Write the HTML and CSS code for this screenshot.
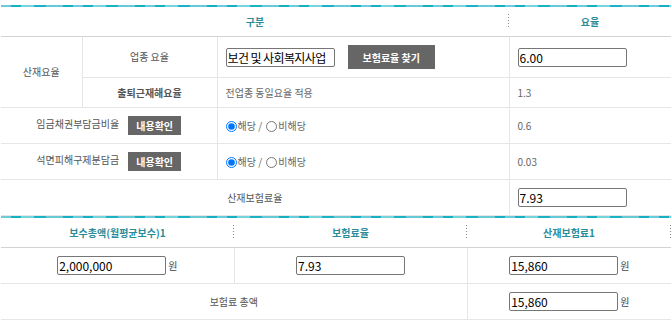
FILE: index.html
```html
<!DOCTYPE html>
<html>
<head>
	<meta charset="UTF-8">
	<title>산재보험료 계산</title>
	<link rel="stylesheet" href="styles.css">
</head>
<body>
	<div class="calc">
		<div class="bar"></div>
		<table class="rate_table">
			<colgroup>
				<col class="c1"><col class="c2"><col class="c3"><col>
			</colgroup>
			<tr class="head">
				<th colspan="3" class="dotted">구분</th>
				<th>요율</th>
			</tr>
			<tr class="tall">
				<td rowspan="2" class="label line_r">산재요율</td>
				<td class="label line_r">업종 요율</td>
				<td class="left line_r">
					<input type="text" class="box kind" value="보건 및 사회복지사업">
					<button type="button" class="btn_find">보험료율 찾기</button>
				</td>
				<td class="left"><input type="text" class="box" value="6.00"></td>
			</tr>
			<tr class="short">
				<td class="label strong line_r">출퇴근재해요율</td>
				<td class="left note line_r">전업종 동일요율 적용</td>
				<td class="left note">1.3</td>
			</tr>
			<tr>
				<td colspan="2" class="label line_r">임금채권부담금비율<button type="button" class="btn_view">내용확인</button></td>
				<td class="left note line_r">
					<label><input type="radio" name="r1" checked>해당</label> / <label><input type="radio" name="r1" class="no">비해당</label>
				</td>
				<td class="left note">0.6</td>
			</tr>
			<tr>
				<td colspan="2" class="label line_r">석면피해구제분담금<button type="button" class="btn_view">내용확인</button></td>
				<td class="left note line_r">
					<label><input type="radio" name="r2" checked>해당</label> / <label><input type="radio" name="r2" class="no">비해당</label>
				</td>
				<td class="left note">0.03</td>
			</tr>
			<tr>
				<td colspan="3" class="label line_r">산재보험료율</td>
				<td class="left"><input type="text" class="box" value="7.93"></td>
			</tr>
		</table>

		<div class="bar"></div>
		<table class="fee_table">
			<colgroup>
				<col class="f1"><col class="f2"><col>
			</colgroup>
			<tr class="head">
				<th class="dotted">보수총액(월평균보수)1</th>
				<th class="dotted">보험료율</th>
				<th class="dotted">산재보험료1</th>
			</tr>
			<tr>
				<td class="line_r"><input type="text" class="box" value="2,000,000"><span class="won">원</span></td>
				<td class="line_r"><input type="text" class="box" value="7.93"></td>
				<td><input type="text" class="box" value="15,860"><span class="won">원</span></td>
			</tr>
			<tr>
				<td colspan="2" class="label line_r">보험료 총액</td>
				<td><input type="text" class="box" value="15,860"><span class="won">원</span></td>
			</tr>
		</table>
	</div>
</body>
</html>
```

FILE: styles.css
```css
body {
	margin:0;
	background:#fff;
	font-family:"Noto Sans CJK KR", "Noto Sans", sans-serif;
	font-size:10px;
	color:#555;
}
.calc {
	padding:5px 1px 0 1px;
}
.bar {
	height:2px;
	background:repeating-linear-gradient(to right, #6accd8 0, #6accd8 10px, #16b0c4 10px, #16b0c4 20px, #7ad2dc 20px, #7ad2dc 33px, #1ab2c5 33px, #1ab2c5 45px, #66cad6 45px, #66cad6 62px, #14afc3 62px, #14afc3 72px);
}
table {
	width:100%;
	border-collapse:collapse;
	table-layout:fixed;
}
.c1 { width:81px; }
.c2 { width:135px; }
.c3 { width:292px; }
.f1 { width:233px; }
.f2 { width:233px; }
th {
	height:29px;
	padding:0;
	font-weight:bold;
	color:#2b8c99;
	text-align:center;
	border-bottom:1px solid #d3d3d3;
}
th.dotted {
	background-image:repeating-linear-gradient(to bottom, #888 0, #888 1px, transparent 1px, transparent 3px);
	background-size:1px 15px;
	background-position:right center;
	background-repeat:no-repeat;
}
td {
	padding:0;
	height:35px;
	border-bottom:1px solid #e6e6e6;
	text-align:center;
	line-height:14px;
}
tr.tall td {
	height:40px;
}
tr.short td {
	height:29px;
}
.line_r {
	border-right:1px solid #e6e6e6;
}
.label {
	color:#555;
}
.strong {
	font-weight:bold;
	color:#555;
}
.left {
	text-align:left;
	padding-left:8px;
}
.note {
	color:#666;
}
.box {
	box-sizing:border-box;
	width:109px;
	height:19px;
	padding:0 1px;
	border:1px solid #767676;
	border-radius:2px;
	font-family:"Noto Sans CJK KR", "Noto Sans", sans-serif;
	font-size:12px;
	color:#000;
	vertical-align:middle;
}
.kind {
	letter-spacing:-0.6px;
}
.btn_find {
	margin-left:11px;
	width:87px;
	height:24px;
	border:0;
	background:#666;
	color:#fff;
	font-family:"Noto Sans CJK KR", "Noto Sans", sans-serif;
	font-size:10px;
	font-weight:bold;
	vertical-align:middle;
}
.btn_view {
	margin-left:9px;
	width:53px;
	height:19px;
	padding:0;
	border:0;
	background:#666;
	color:#fff;
	font-family:"Noto Sans CJK KR", "Noto Sans", sans-serif;
	font-size:10px;
	font-weight:bold;
	vertical-align:middle;
}
input[type="radio"] {
	width:11px;
	height:11px;
	margin:0 1px 0 0;
	vertical-align:-2px;
}
input[type="radio"].no {
	margin-left:2px;
}
.won {
	margin-left:2px;
	font-size:10px;
	color:#444;
	vertical-align:middle;
}
```
